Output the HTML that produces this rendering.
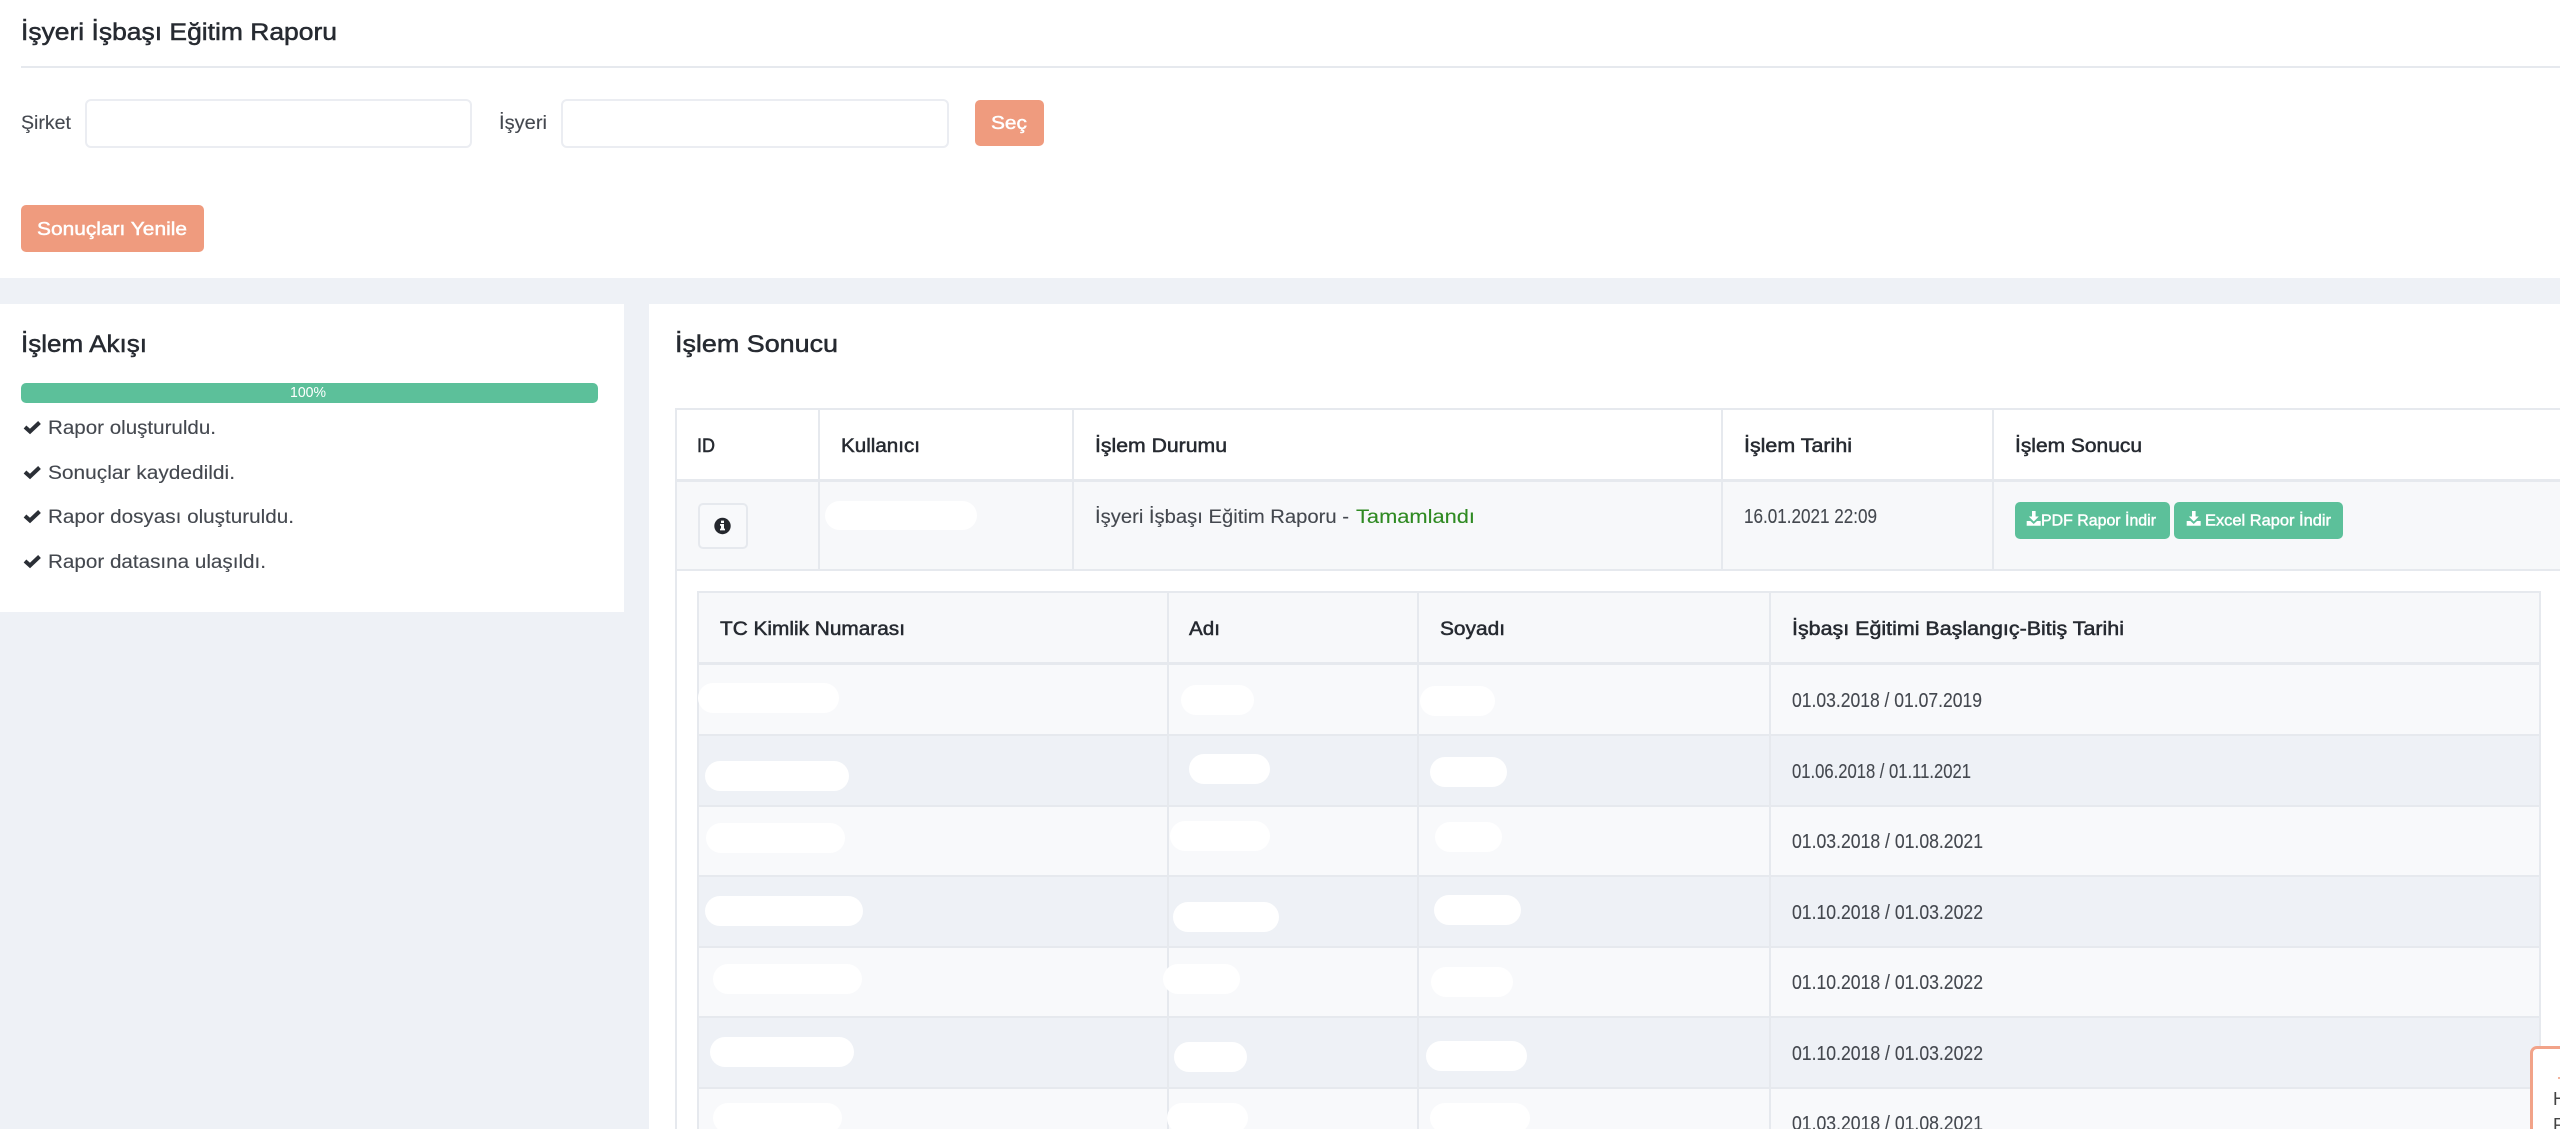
<!DOCTYPE html>
<html lang="tr">
<head>
<meta charset="utf-8">
<title>İşyeri İşbaşı Eğitim Raporu</title>
<style>
html,body{margin:0;padding:0;width:2560px;height:1129px;overflow:hidden;background:#eef1f6}
#page{position:absolute;left:0;top:0;width:2560px;height:1129px;overflow:hidden;background:#eef1f6}
#page div,#page input{position:absolute;box-sizing:border-box}
.white{background:#fff}
.l{background:#e6e9ee}
.field{background:#fff;border:2px solid #ebedf2;border-radius:6px;outline:0}
.btn{background:#ef9b7e;border-radius:5px}
.gbtn{background:#5cc09a;border-radius:5px}
.blob{background:#fff;border-radius:15px;height:30px}
svg#t{position:absolute;left:0;top:0}
svg#t text{font-family:"Liberation Sans",sans-serif;font-size:19px;fill:#44484f;stroke:#44484f;stroke-width:.12px;white-space:pre}
svg#t .d{font-size:20px}
svg#t .h{fill:#262a31;stroke:#262a31;stroke-width:.5px}
svg#t .b{font-size:24px}
svg#t .w{fill:#fff;stroke:#fff;stroke-width:.45px}
</style>
</head>
<body>
<div id="page">
<div class="white" style="left:0;top:0;width:2560px;height:278px"></div>
<div class="l" style="left:21px;top:66px;width:2539px;height:2px"></div>
<input class="field" style="left:85px;top:99px;width:387px;height:49px" aria-label="Şirket">
<input class="field" style="left:561px;top:99px;width:388px;height:49px" aria-label="İşyeri">
<div class="btn" style="left:975px;top:100px;width:69px;height:46px"></div>
<div class="btn" style="left:21px;top:205px;width:183px;height:47px"></div>

<div class="white" style="left:0;top:304px;width:624px;height:308px"></div>
<div style="left:21px;top:383px;width:577px;height:20px;background:#5cc09a;border-radius:5px"></div>

<div class="white" style="left:649px;top:304px;width:1911px;height:825px"></div>

<!-- outer table -->
<div style="left:677px;top:481px;width:1883px;height:89px;background:#f7f8fa"></div>
<div class="l" style="left:675px;top:408px;width:1885px;height:2px"></div>
<div class="l" style="left:675px;top:408px;width:2px;height:721px"></div>
<div class="l" style="left:675px;top:479px;width:1885px;height:3px"></div>
<div class="l" style="left:675px;top:569px;width:1885px;height:2px"></div>
<div class="l" style="left:818px;top:408px;width:2px;height:162px"></div>
<div class="l" style="left:1072px;top:408px;width:2px;height:162px"></div>
<div class="l" style="left:1721px;top:408px;width:2px;height:162px"></div>
<div class="l" style="left:1992px;top:408px;width:2px;height:162px"></div>

<div style="left:698px;top:503px;width:50px;height:46px;background:#f8f9fb;border:2px solid #e6e9ee;border-radius:5px"></div>
<div class="gbtn" style="left:2015px;top:502px;width:155px;height:37px"></div>
<div class="gbtn" style="left:2174px;top:502px;width:169px;height:37px"></div>

<!-- inner table -->
<div style="left:698px;top:592px;width:1842px;height:72px;background:#f7f8fa"></div>
<div style="left:698px;top:664px;width:1842px;height:71px;background:#f8f9fb"></div>
<div style="left:698px;top:735px;width:1842px;height:71px;background:#eef1f6"></div>
<div style="left:698px;top:806px;width:1842px;height:70px;background:#f8f9fb"></div>
<div style="left:698px;top:876px;width:1842px;height:71px;background:#eef1f6"></div>
<div style="left:698px;top:947px;width:1842px;height:70px;background:#f8f9fb"></div>
<div style="left:698px;top:1017px;width:1842px;height:71px;background:#eef1f6"></div>
<div style="left:698px;top:1088px;width:1842px;height:41px;background:#f8f9fb"></div>

<div class="l" style="left:697px;top:591px;width:1843px;height:2px"></div>
<div class="l" style="left:697px;top:662px;width:1843px;height:3px"></div>
<div class="l" style="left:697px;top:734px;width:1843px;height:2px"></div>
<div class="l" style="left:697px;top:805px;width:1843px;height:2px"></div>
<div class="l" style="left:697px;top:875px;width:1843px;height:2px"></div>
<div class="l" style="left:697px;top:946px;width:1843px;height:2px"></div>
<div class="l" style="left:697px;top:1016px;width:1843px;height:2px"></div>
<div class="l" style="left:697px;top:1087px;width:1843px;height:2px"></div>
<div class="l" style="left:697px;top:591px;width:2px;height:538px"></div>
<div class="l" style="left:1167px;top:591px;width:1.5px;height:538px"></div>
<div class="l" style="left:1417px;top:591px;width:1.5px;height:538px"></div>
<div class="l" style="left:1769px;top:591px;width:1.5px;height:538px"></div>
<div class="l" style="left:2539px;top:591px;width:2px;height:538px"></div>

<!-- redaction blobs -->
<div class="blob" style="left:825px;top:501px;width:152px;height:29px"></div>
<div class="blob" style="left:698px;top:683px;width:141px"></div>
<div class="blob" style="left:1181px;top:685px;width:73px"></div>
<div class="blob" style="left:1420px;top:686px;width:75px"></div>
<div class="blob" style="left:705px;top:761px;width:144px"></div>
<div class="blob" style="left:1189px;top:754px;width:81px"></div>
<div class="blob" style="left:1430px;top:757px;width:77px"></div>
<div class="blob" style="left:706px;top:823px;width:139px"></div>
<div class="blob" style="left:1170px;top:821px;width:100px"></div>
<div class="blob" style="left:1435px;top:822px;width:67px"></div>
<div class="blob" style="left:705px;top:896px;width:158px"></div>
<div class="blob" style="left:1173px;top:902px;width:106px"></div>
<div class="blob" style="left:1434px;top:895px;width:87px"></div>
<div class="blob" style="left:713px;top:964px;width:149px"></div>
<div class="blob" style="left:1163px;top:964px;width:77px"></div>
<div class="blob" style="left:1431px;top:967px;width:82px"></div>
<div class="blob" style="left:710px;top:1037px;width:144px"></div>
<div class="blob" style="left:1174px;top:1042px;width:73px"></div>
<div class="blob" style="left:1426px;top:1041px;width:101px"></div>
<div class="blob" style="left:713px;top:1103px;width:129px"></div>
<div class="blob" style="left:1167px;top:1103px;width:81px"></div>
<div class="blob" style="left:1430px;top:1103px;width:100px"></div>

<!-- toast -->
<div style="left:2530px;top:1046px;width:40px;height:100px;background:#fff;border:3px solid #f2a389;border-radius:7px"></div>

<svg id="t" width="2560" height="1129" viewBox="0 0 2560 1129" xmlns="http://www.w3.org/2000/svg">
<g>
<text class="h b" x="21" y="40" textLength="316" lengthAdjust="spacingAndGlyphs">İşyeri İşbaşı Eğitim Raporu</text>
<text x="21" y="129" textLength="50" lengthAdjust="spacingAndGlyphs">Şirket</text>
<text x="499" y="129" textLength="48" lengthAdjust="spacingAndGlyphs">İşyeri</text>
<text class="w" x="991" y="129" textLength="36" lengthAdjust="spacingAndGlyphs" style="font-size:18px">Seç</text>
<text class="w" x="37" y="235" textLength="150" lengthAdjust="spacingAndGlyphs" style="font-size:18px">Sonuçları Yenile</text>

<text class="h b" x="21" y="352" textLength="126" lengthAdjust="spacingAndGlyphs">İşlem Akışı</text>
<text x="290" y="397" textLength="36" lengthAdjust="spacingAndGlyphs" style="font-size:15px;fill:#fff;stroke:none">100%</text>
<text x="48" y="434" textLength="168" lengthAdjust="spacingAndGlyphs">Rapor oluşturuldu.</text>
<text x="48" y="479" textLength="187" lengthAdjust="spacingAndGlyphs">Sonuçlar kaydedildi.</text>
<text x="48" y="523" textLength="246" lengthAdjust="spacingAndGlyphs">Rapor dosyası oluşturuldu.</text>
<text x="48" y="568" textLength="218" lengthAdjust="spacingAndGlyphs">Rapor datasına ulaşıldı.</text>

<text class="h b" x="675" y="352" textLength="163" lengthAdjust="spacingAndGlyphs">İşlem Sonucu</text>

<text class="h" x="697" y="452" textLength="18" lengthAdjust="spacingAndGlyphs">ID</text>
<text class="h" x="841" y="452" textLength="79" lengthAdjust="spacingAndGlyphs">Kullanıcı</text>
<text class="h" x="1095" y="452" textLength="132" lengthAdjust="spacingAndGlyphs">İşlem Durumu</text>
<text class="h" x="1744" y="452" textLength="108" lengthAdjust="spacingAndGlyphs">İşlem Tarihi</text>
<text class="h" x="2015" y="452" textLength="127" lengthAdjust="spacingAndGlyphs">İşlem Sonucu</text>

<text x="1095" y="523" textLength="254" lengthAdjust="spacingAndGlyphs">İşyeri İşbaşı Eğitim Raporu -</text>
<text x="1356" y="523" textLength="119" lengthAdjust="spacingAndGlyphs" style="fill:#2f8a22;stroke:#2f8a22">Tamamlandı</text>
<text class="d" x="1744" y="523" textLength="133" lengthAdjust="spacingAndGlyphs">16.01.2021 22:09</text>

<text class="w" x="2041" y="525.5" textLength="115" lengthAdjust="spacingAndGlyphs" style="font-size:16px">PDF Rapor İndir</text>
<text class="w" x="2205" y="525.5" textLength="126" lengthAdjust="spacingAndGlyphs" style="font-size:16px">Excel Rapor İndir</text>

<text class="h" x="720" y="635" textLength="185" lengthAdjust="spacingAndGlyphs">TC Kimlik Numarası</text>
<text class="h" x="1189" y="635" textLength="31" lengthAdjust="spacingAndGlyphs">Adı</text>
<text class="h" x="1440" y="635" textLength="65" lengthAdjust="spacingAndGlyphs">Soyadı</text>
<text class="h" x="1792" y="635" textLength="332" lengthAdjust="spacingAndGlyphs">İşbaşı Eğitimi Başlangıç-Bitiş Tarihi</text>

<text class="d" x="1792" y="707" textLength="190" lengthAdjust="spacingAndGlyphs">01.03.2018 / 01.07.2019</text>
<text class="d" x="1792" y="778" textLength="179" lengthAdjust="spacingAndGlyphs">01.06.2018 / 01.11.2021</text>
<text class="d" x="1792" y="848" textLength="191" lengthAdjust="spacingAndGlyphs">01.03.2018 / 01.08.2021</text>
<text class="d" x="1792" y="919" textLength="191" lengthAdjust="spacingAndGlyphs">01.10.2018 / 01.03.2022</text>
<text class="d" x="1792" y="989" textLength="191" lengthAdjust="spacingAndGlyphs">01.10.2018 / 01.03.2022</text>
<text class="d" x="1792" y="1060" textLength="191" lengthAdjust="spacingAndGlyphs">01.10.2018 / 01.03.2022</text>
<text class="d" x="1792" y="1130" textLength="191" lengthAdjust="spacingAndGlyphs">01.03.2018 / 01.08.2021</text>

<text x="2553" y="1105" style="font-size:18px;fill:#444;stroke:none">H</text>
<text x="2553" y="1131" style="font-size:18px;fill:#444;stroke:none">R</text>
</g>

<!-- check icons -->
<g fill="none" stroke="#2b2f36" stroke-width="4" stroke-linejoin="miter">
<polyline points="25,427 30,431.5 39.5,422.5"/>
<polyline points="25,472 30,476.5 39.5,467.5"/>
<polyline points="25,516 30,520.5 39.5,511.5"/>
<polyline points="25,561 30,565.5 39.5,556.5"/>
</g>

<!-- info icon -->
<circle cx="722.5" cy="526" r="8.2" fill="#24272d"/>
<path d="M721 520.6h3v2.4h-3zM720 524h4v4.6h1v1.8h-5v-1.8h1v-2.8h-1z" fill="#f8f9fb"/>

<!-- download icons -->
<g fill="#fff">
<path d="M2032 511h3.6v5.5h3.2l-5 5-5-5h3.2zM2026.7 521h3.7l3.3 3 3.3-3h3.7v4.7h-14z"/>
<path d="M2192 511h3.6v5.5h3.2l-5 5-5-5h3.2zM2186.7 521h3.7l3.3 3 3.3-3h3.7v4.7h-14z"/>
</g>
<rect x="2558" y="1077" width="2" height="2" fill="#f2b39c"/>
</svg>
</div>
</body>
</html>
